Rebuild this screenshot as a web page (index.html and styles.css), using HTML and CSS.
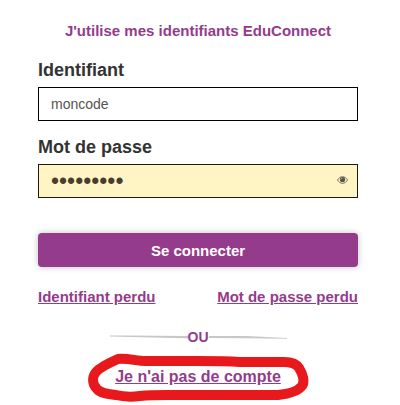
FILE: index.html
```
<!DOCTYPE html>
<html lang="fr">

<head>
    <meta charset="UTF-8">
    <title>EduConnect</title>
    <link rel="stylesheet" href="styles.css">
</head>

<body>

    <main>
        <h1>J'utilise mes identifiants EduConnect</h1>

        <form id="form">
            <label for="identifiant">Identifiant</label>
            <input type="text" id="identifiant" name="identifiant" value="moncode">

            <label for="motdepasse">Mot de passe</label>
            <div class="password">
                <input type="password" id="motdepasse" name="motdepasse" value="motpasse1">
                <button type="button" class="eye" aria-label="Afficher le mot de passe">
                    <svg width="11" height="8" viewBox="0 0 11 8">
                        <path d="M0.5 4C3 -0.4 8 -0.4 10.5 4C8 8.4 3 8.4 0.5 4Z" fill="none" stroke="#77725c" />
                        <circle cx="5.5" cy="3.6" r="2.6" fill="#55524a" />
                        <path d="M4.1 3.4Q4.2 2.2 5.5 2.1" fill="none" stroke="#d8d0ac" stroke-width="0.7" />
                    </svg>
                </button>
            </div>

            <button type="submit" class="submit">Se connecter</button>
        </form>

        <div class="links">
            <a href="#">Identifiant perdu</a>
            <a href="#">Mot de passe perdu</a>
        </div>

        <div class="separator">
            <svg width="78" height="6" viewBox="0 0 78 6">
                <path d="M0 1.6L20 1.4L78 2V4.2L62 4L20 3L0 2.4Z" fill="#c8c8c8" />
            </svg>
            <span>OU</span>
            <svg width="78" height="6" viewBox="0 0 78 6">
                <path d="M0 2L38 2L78 4V4.8L38 4.2L0 4Z" fill="#c8c8c8" />
            </svg>
        </div>

        <div class="signup">
            <svg class="circle" width="224" height="54" viewBox="0 0 224 54">
                <path d="M32 8C23 12 14 16 10 21C6 26 6 33 11 38C14 42 22 43 30 44C38 46 46 46 54 45C64 44 72 44 82 44L192 44C202 43 212 40 216 35C219 31 217 23 213 17C210 12 205 11 198 11L154 11C140 10 126 10 111 10L60 10C50 10 42 7 32 8Z" fill="none" stroke="#e8191c" stroke-width="10" stroke-linejoin="round" />
            </svg>
            <a href="#">Je n'ai pas de compte</a>
        </div>
    </main>

</body>

</html>
```

FILE: styles.css
```
body {
    font-family: "Liberation Sans", Arial, sans-serif;
    font-size: 15px;
    line-height: 20px;
    background-color: #fff;
    color: #333;
    margin: 0;
}

main {
    padding: 21px 42px 18px 38px;
}

h1 {
    font-size: 15px;
    line-height: 20px;
    text-align: center;
    color: #943b8c;
    margin: 0 0 18px;
}

label {
    display: block;
    font-size: 18px;
    line-height: 22px;
    font-weight: bold;
    margin-bottom: 6px;
}

input {
    display: block;
    box-sizing: border-box;
    width: 100%;
    height: 34px;
    border: 1px solid #000;
    padding: 0 12px;
    font-family: inherit;
    font-size: 14px;
    color: #555;
    margin-bottom: 15px;
}

a {
    color: #943b8c;
    font-weight: bold;
}

.password {
    position: relative;
}

.password input {
    background-color: #fff5c4;
    border-color: #1c1a10;
    color: #4b3a30;
    font-size: 23px;
    margin-bottom: 35px;
}

.eye {
    position: absolute;
    top: 8px;
    right: 10px;
    display: flex;
    padding: 4px 0;
    border: 0;
    background: none;
}

.submit {
    display: block;
    width: 100%;
    height: 34px;
    border: 0;
    border-radius: 4px;
    background-color: #943b8c;
    box-shadow: 0 0 6px rgba(0, 0, 0, 0.25);
    color: #fff;
    font-family: inherit;
    font-size: 15px;
    font-weight: bold;
}

.links {
    display: flex;
    justify-content: space-between;
    margin-top: 20px;
}

.separator {
    display: flex;
    justify-content: center;
    align-items: center;
    margin-top: 20px;
    color: #943b8c;
    font-size: 14px;
    font-weight: bold;
}

.signup {
    position: relative;
    margin-top: 20px;
    text-align: center;
    font-size: 16px;
}

.circle {
    position: absolute;
    top: -16px;
    left: 50%;
    margin-left: -112px;
    pointer-events: none;
}
```
